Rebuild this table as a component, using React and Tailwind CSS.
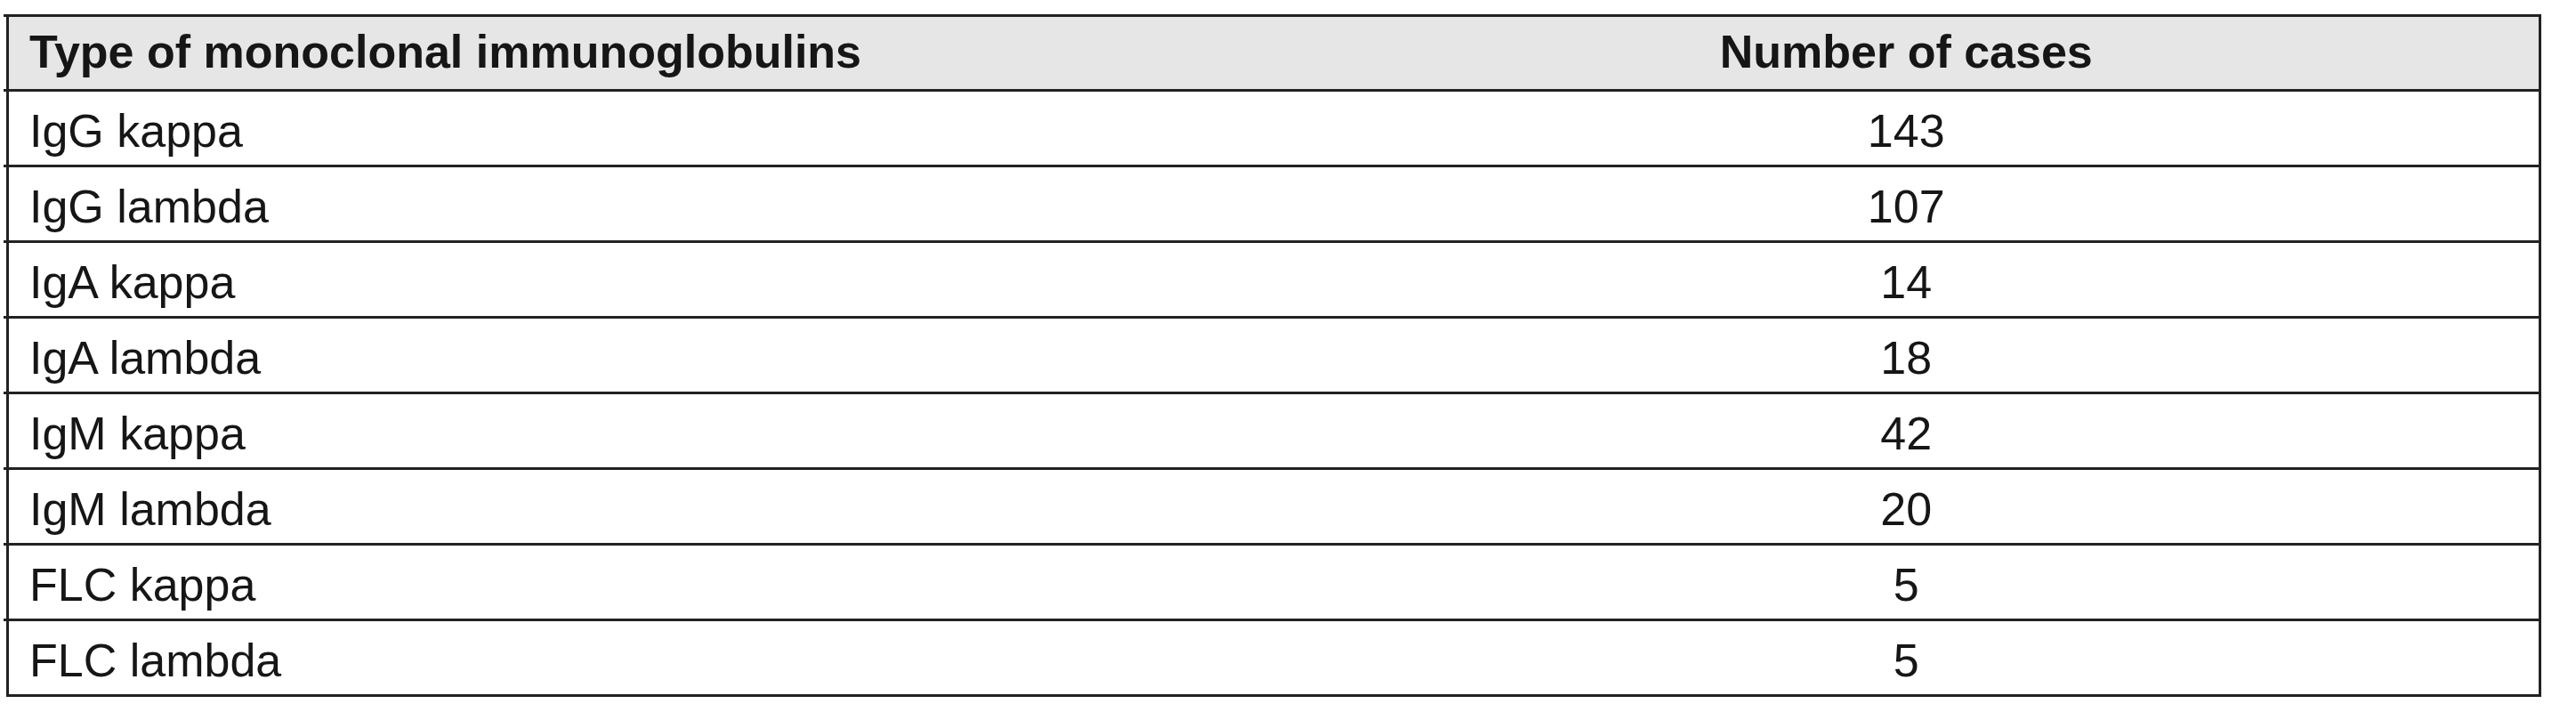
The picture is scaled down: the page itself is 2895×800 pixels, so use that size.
const rows = [
    ['IgG kappa', '143'],
    ['IgG lambda', '107'],
    ['IgA kappa', '14'],
    ['IgA lambda', '18'],
    ['IgM kappa', '42'],
    ['IgM lambda', '20'],
    ['FLC kappa', '5'],
    ['FLC lambda', '5'],
];

const App = () => {
    return (
        <div className="w-[2895px] h-[800px] bg-white pt-[16px] pl-[4px] font-['Liberation_Sans',Arial,sans-serif] text-[52px] text-[#161616]">
            <div className="w-[2852px]">
                {/* Header */}
                <div className="border-t-[3px] border-[#222]">
                    <div className="ml-[3px] grid grid-cols-2 h-[81px] bg-[#e6e6e6] border-x-[3px] border-[#222] font-bold leading-none">
                        <div className="flex items-center pl-[23px] pb-[3px]">Type of monoclonal immunoglobulins</div>
                        <div className="flex items-center justify-center pb-[3px]">Number of cases</div>
                    </div>
                </div>

                {/* Body */}
                {rows.map(([type, count]) => (
                    <div key={type} className="border-t-[3px] border-[#222]">
                        <div className="ml-[3px] grid grid-cols-2 h-[82px] bg-white border-x-[3px] border-[#222] leading-none">
                            <div className="flex items-center pl-[23px] pt-[6px]">{type}</div>
                            <div className="flex items-center justify-center pt-[6px]">{count}</div>
                        </div>
                    </div>
                ))}
                <div className="ml-[3px] border-t-[3px] border-[#222]"></div>
            </div>
        </div>
    );
};

export default App;
